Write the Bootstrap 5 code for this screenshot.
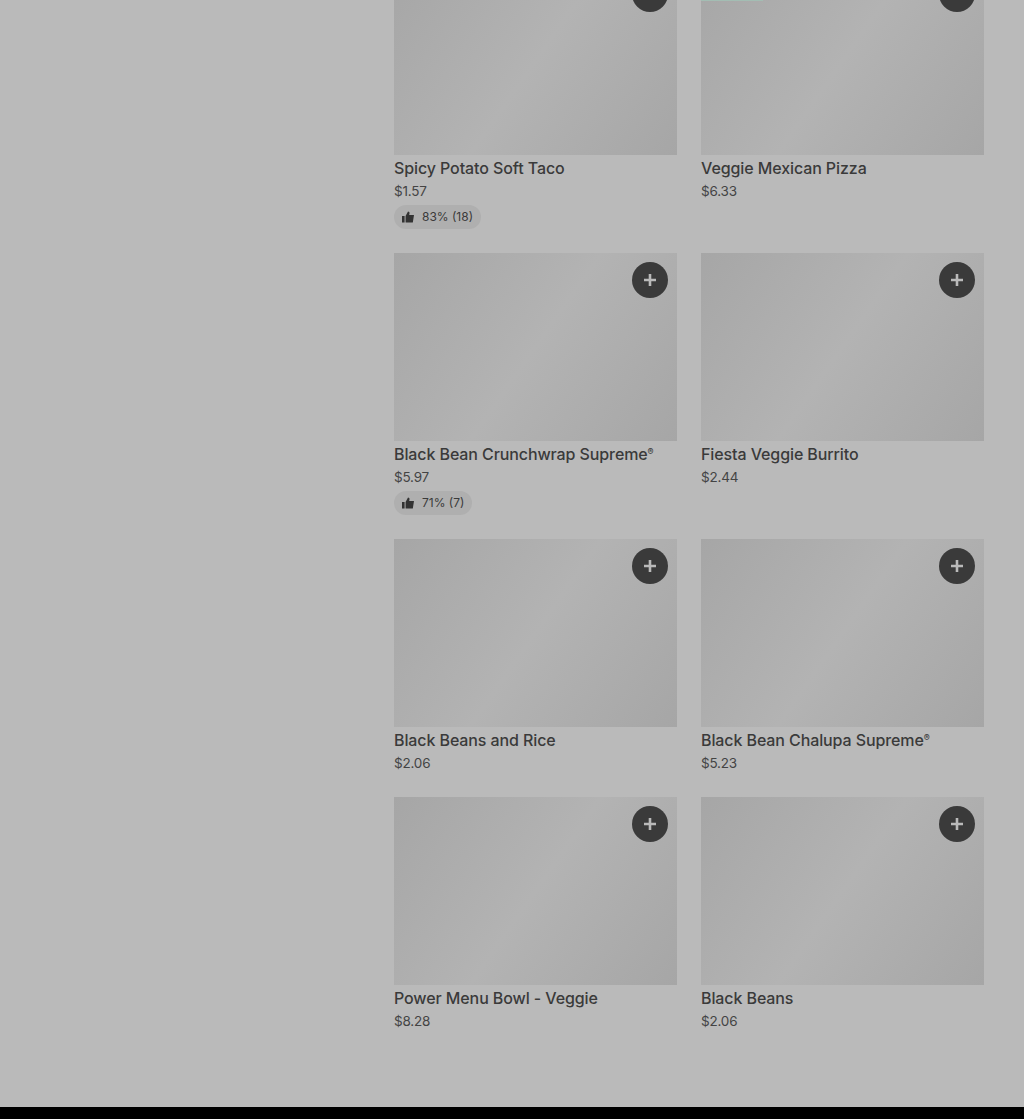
<!DOCTYPE html>
<html lang="en">
<head>
  <meta charset="UTF-8" />
  <meta name="viewport" content="width=device-width, initial-scale=1.0"/>
  <title>Menu - Veggie</title>
  <link rel="stylesheet" href="https://cdn.jsdelivr.net/npm/bootstrap@5.3.0/dist/css/bootstrap.min.css" />
  <style>
  html, body {
    height: 1119px;
    overflow: hidden;
  }
  body {
    background-color: #bababa;
    color: #3a3a3a;
    font-family: "Inter", "Liberation Sans", sans-serif;
    display: flex;
    flex-direction: column;
  }
  .menu-area {
    flex: 1;
    padding: 0 40px 0 394px;
    overflow: hidden;
  }
  .menu-grid {
    display: grid;
    grid-template-columns: 283px 283px;
    column-gap: 24px;
    margin-top: -33px; /* page is scrolled down a bit */
  }
  .menu-item {
    padding-bottom: 24px;
  }
  .menu-thumb {
    height: 188px;
    background: linear-gradient(125deg, #a6a6a6 0%, #b3b3b3 50%, #a6a6a6 100%);
    position: relative;
  }
  .add-btn {
    position: absolute;
    top: 9px;
    right: 9px;
    width: 36px;
    height: 36px;
    border-radius: 50%;
    border: 0;
    padding: 0;
    background: #3a3a3a;
    display: flex;
    align-items: center;
    justify-content: center;
  }
  .promo-edge {
    position: absolute;
    top: 0;
    left: 0;
    width: 62px;
    height: 34px;
    border-bottom: 1px solid #a3bdb3;
  }
  .item-name {
    font-size: 16px;
    line-height: 20px;
    font-weight: 500;
    letter-spacing: -0.1px;
    margin-top: 3px;
  }
  .item-name sup {
    font-size: 9px;
    top: -0.6em;
  }
  .item-price {
    font-size: 13.5px;
    line-height: 20px;
    letter-spacing: -0.2px;
    margin-top: 3px;
    color: #444;
  }
  .rate-pill {
    display: inline-flex;
    align-items: center;
    gap: 8px;
    height: 24px;
    padding: 0 8px;
    margin-top: 4px;
    border-radius: 12px;
    background: #afafaf;
    font-size: 12px;
    color: #3a3a3a;
  }
  .page-foot {
    height: 12px;
    background: #000;
    flex-shrink: 0;
  }
  </style>
</head>
<body>

  <div class="menu-area">
    <div class="menu-grid" id="menuGrid"></div>
  </div>
  <div class="page-foot"></div>

  <script src="https://cdn.jsdelivr.net/npm/bootstrap@5.3.0/dist/js/bootstrap.bundle.min.js"></script>
  <script>
    const items = [
      { name: "Spicy Potato Soft Taco", price: "$1.57", rate: "83% (18)" },
      { name: "Veggie Mexican Pizza", price: "$6.33", promo: true },
      { name: "Black Bean Crunchwrap Supreme<sup>®</sup>", price: "$5.97", rate: "71% (7)" },
      { name: "Fiesta Veggie Burrito", price: "$2.44" },
      { name: "Black Beans and Rice", price: "$2.06" },
      { name: "Black Bean Chalupa Supreme<sup>®</sup>", price: "$5.23" },
      { name: "Power Menu Bowl - Veggie", price: "$8.28" },
      { name: "Black Beans", price: "$2.06" }
    ];

    const plusIcon = '<svg width="12" height="12" viewBox="0 0 12 12"><path d="M4.7 0h2.6v4.7H12v2.6H7.3V12H4.7V7.3H0V4.7h4.7z" fill="#bababa"/></svg>';
    const thumbIcon = '<svg width="12" height="12" viewBox="0 0 12 12"><path d="M0 5h2.6v6.5H0zM3.6 5 6 .5c1 0 1.7.8 1.5 1.8L7.2 4H12l-1.2 7.5H3.6z" fill="#333"/></svg>';

    document.getElementById("menuGrid").innerHTML = items.map(item => `
      <div class="menu-item">
        <div class="menu-thumb">
          ${item.promo ? '<div class="promo-edge"></div>' : ''}
          <button type="button" class="add-btn" aria-label="Add">${plusIcon}</button>
        </div>
        <div class="item-name">${item.name}</div>
        <div class="item-price">${item.price}</div>
        ${item.rate ? `<div class="rate-pill">${thumbIcon}<span>${item.rate}</span></div>` : ''}
      </div>`).join("");
  </script>
</body>
</html>
